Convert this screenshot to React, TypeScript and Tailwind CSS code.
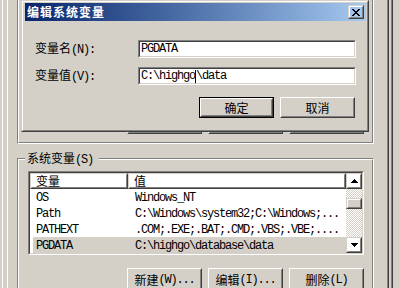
import type { ReactNode } from "react";

const rows = [
  ["OS", "Windows_NT"],
  ["Path", "C:\\Windows\\system32;C:\\Windows;..."],
  ["PATHEXT", ".COM;.EXE;.BAT;.CMD;.VBS;.VBE;...."],
  ["PGDATA", "C:\\highgo\\database\\data"],
];

// SimSun-like latin: 6px per char
function M({ children }: { children: ReactNode }) {
  return <span className="font-['Liberation_Mono',monospace] text-[12px] tracking-[-1.2px]">{children}</span>;
}

function Btn({ children, def }: { children: ReactNode; def?: boolean }) {
  if (def) {
    return (
      <div className="flex h-[21px] w-[75px] border border-black">
        <div className="flex flex-1 border border-t-white border-l-white border-r-[#404040] border-b-[#404040]">
          <div className="flex flex-1 items-center justify-center border border-t-[#d4d0c8] border-l-[#d4d0c8] border-r-[#808080] border-b-[#808080] leading-none">
            {children}
          </div>
        </div>
      </div>
    );
  }
  return (
    <div className="flex h-[21px] w-[75px] border border-t-white border-l-white border-r-[#404040] border-b-[#404040]">
      <div className="flex flex-1 items-center justify-center border border-t-[#d4d0c8] border-l-[#d4d0c8] border-r-[#808080] border-b-[#808080] leading-none">
        {children}
      </div>
    </div>
  );
}

function TallBtn({ children }: { children: ReactNode }) {
  return (
    <div className="flex h-[23px] w-[75px] border border-t-white border-l-white border-r-[#404040] border-b-[#404040]">
      <div className="flex flex-1 items-center justify-center border border-t-[#d4d0c8] border-l-[#d4d0c8] border-r-[#808080] border-b-[#808080] leading-none">
        {children}
      </div>
    </div>
  );
}

function Raised({ children, className }: { children?: ReactNode; className?: string }) {
  return (
    <div className={"flex border border-t-[#d4d0c8] border-l-[#d4d0c8] border-r-[#404040] border-b-[#404040] " + (className || "")}>
      <div className="flex flex-1 items-center justify-center border border-t-white border-l-white border-r-[#808080] border-b-[#808080]">
        {children}
      </div>
    </div>
  );
}

function Sunken({ children, className }: { children?: ReactNode; className?: string }) {
  return (
    <div className={"flex border border-t-[#808080] border-l-[#808080] border-r-white border-b-white " + (className || "")}>
      <div className="flex min-w-0 flex-1 border border-t-[#404040] border-l-[#404040] border-r-[#d4d0c8] border-b-[#d4d0c8] bg-white">
        {children}
      </div>
    </div>
  );
}

function Arrow({ down }: { down?: boolean }) {
  return (
    <svg width="7" height="4" viewBox="0 0 7 4" shapeRendering="crispEdges">
      <path d={down ? "M0 0h7v1H0zM1 1h5v1H1zM2 2h3v1H2zM3 3h1v1H3z" : "M3 0h1v1H3zM2 1h3v1H2zM1 2h5v1H1zM0 3h7v1H0z"} fill="#000" />
    </svg>
  );
}

function Dialog() {
  return (
    <div className="absolute left-[21px] top-0 h-[132px] w-[348px] border border-t-[#d4d0c8] border-l-[#d4d0c8] border-r-[#404040] border-b-[#404040] bg-[#d4d0c8]">
      <div className="flex h-full flex-col border border-t-white border-l-white border-r-[#808080] border-b-[#808080]">
        <div className="ml-[2px] mr-[1px] mt-[1px] flex h-[18px] items-center bg-gradient-to-r from-[#0a246a] to-[#a6caf0] pl-[2px] pr-[2px]">
          <span className="flex-1 text-[12px] font-bold leading-none tracking-[1px] text-white">编辑系统变量</span>
          <Raised className="h-[14px] w-[16px]">
            <svg width="8" height="7" viewBox="0 0 8 7" shapeRendering="crispEdges">
              <path d="M0 0h2v1H0zM6 0h2v1H6zM1 1h2v1H1zM5 1h2v1H5zM2 2h4v1H2zM3 3h2v1H3zM2 4h4v1H2zM1 5h2v1H1zM5 5h2v1H5zM0 6h2v1H0zM6 6h2v1H6z" fill="#000" />
            </svg>
          </Raised>
        </div>
        <div className="mt-[19px] flex items-center">
          <div className="w-[115px] pl-[12px] leading-none">
            变量名<M>(N):</M>
          </div>
          <Sunken className="h-[18px] w-[218px]">
            <div className="flex items-center pl-[1px]">
              <M>PGDATA</M>
            </div>
          </Sunken>
        </div>
        <div className="mt-[9px] flex items-center">
          <div className="w-[115px] pl-[12px] leading-none">
            变量值<M>(V):</M>
          </div>
          <Sunken className="h-[18px] w-[218px]">
            <div className="flex items-center pl-[1px]">
              <M>C:\highgo</M>
              <span className="h-[13px] w-[1px] bg-black" />
              <M>\data</M>
            </div>
          </Sunken>
        </div>
        <div className="mt-[12px] flex gap-[6px] pl-[176px]">
          <Btn def>确定</Btn>
          <Btn>取消</Btn>
        </div>
      </div>
    </div>
  );
}

export default function App() {
  return (
    <div className="relative h-[288px] w-[399px] overflow-hidden bg-[#d4d0c8] font-['Noto_Sans_CJK_SC',sans-serif] text-[12px] text-black">
      {/* system properties window edge */}
      <div className="ml-[2px] mr-[6px] h-full border-l border-r border-l-white border-r-[#404040]">
        <div className="h-full border-r border-r-[#808080]">
          {/* environment variables window */}
          <div className="ml-[4px] mr-[2px] h-full border-l border-r border-l-white border-r-[#404040]">
            <div className="h-full border-r border-r-[#808080]">
              {/* user variables group (mostly hidden) */}
              <div className="ml-[9px] mr-[13px] h-[144px] border-b border-l border-r border-b-white border-l-[#808080] border-r-white">
                <div className="flex h-full flex-col justify-end border-b border-l border-r border-b-[#808080] border-l-white border-r-[#808080] pb-[8px] pr-[8px]">
                  <div className="flex justify-end gap-[6px]">
                    <TallBtn>新建<M>(U)...</M></TallBtn>
                    <TallBtn>编辑<M>(E)...</M></TallBtn>
                    <TallBtn>删除<M>(D)</M></TallBtn>
                  </div>
                </div>
              </div>

              {/* system variables group */}
              <div className="ml-[9px] mr-[13px] mt-[14px] h-[200px] border-l border-r border-t border-l-[#808080] border-r-white border-t-[#808080]">
                <div className="h-full border-l border-r border-t border-l-white border-r-[#808080] border-t-white">
                  <div className="ml-[6px] -mt-[9px] h-[14px] w-fit bg-[#d4d0c8] pl-[2px] pr-[6px] leading-[14px]">
                    系统变量<M>(S)</M>
                  </div>
                  <Sunken className="ml-[9px] mt-[6px] h-[84px] w-[336px]">
                    <div className="flex min-w-0 flex-1 flex-col">
                      <div className="flex h-[16px]">
                        <Raised className="w-[98px]">
                          <span className="w-full pl-[4px] leading-none">变量</span>
                        </Raised>
                        <Raised className="flex-1">
                          <span className="w-full pl-[4px] leading-none">值</span>
                        </Raised>
                      </div>
                      {rows.map(([name, value], i) => {
                        const sel = i === rows.length - 1;
                        return (
                          <div key={name} className="flex h-[16px] pl-[3px]">
                            <div className={"flex min-w-0 flex-1 items-center " + (sel ? "bg-[#d4d0c8]" : "")}>
                              <div className="w-[95px] pl-[3px]">
                                <M>{name}</M>
                              </div>
                              <div className="min-w-0 flex-1 overflow-hidden whitespace-nowrap pl-[7px]">
                                <M>{value}</M>
                              </div>
                            </div>
                          </div>
                        );
                      })}
                    </div>
                    <div className="flex w-[16px] flex-col">
                      <Raised className="h-[16px] w-[16px]">
                        <Arrow />
                      </Raised>
                      <div className="flex flex-1 flex-col bg-[image:repeating-conic-gradient(#fff_0_25%,#d4d0c8_0_50%)] bg-[length:2px_2px]">
                        <Raised className="mt-[9px] h-[11px] w-[16px] bg-[#d4d0c8]" />
                      </div>
                      <Raised className="h-[16px] w-[16px]">
                        <Arrow down />
                      </Raised>
                    </div>
                  </Sunken>
                  <div className="mt-[13px] flex justify-end gap-[6px] pr-[8px]">
                    <TallBtn>新建<M>(W)...</M></TallBtn>
                    <TallBtn>编辑<M>(I)...</M></TallBtn>
                    <TallBtn>删除<M>(L)</M></TallBtn>
                  </div>
                </div>
              </div>
            </div>
          </div>
        </div>
      </div>
      <Dialog />
    </div>
  );
}
